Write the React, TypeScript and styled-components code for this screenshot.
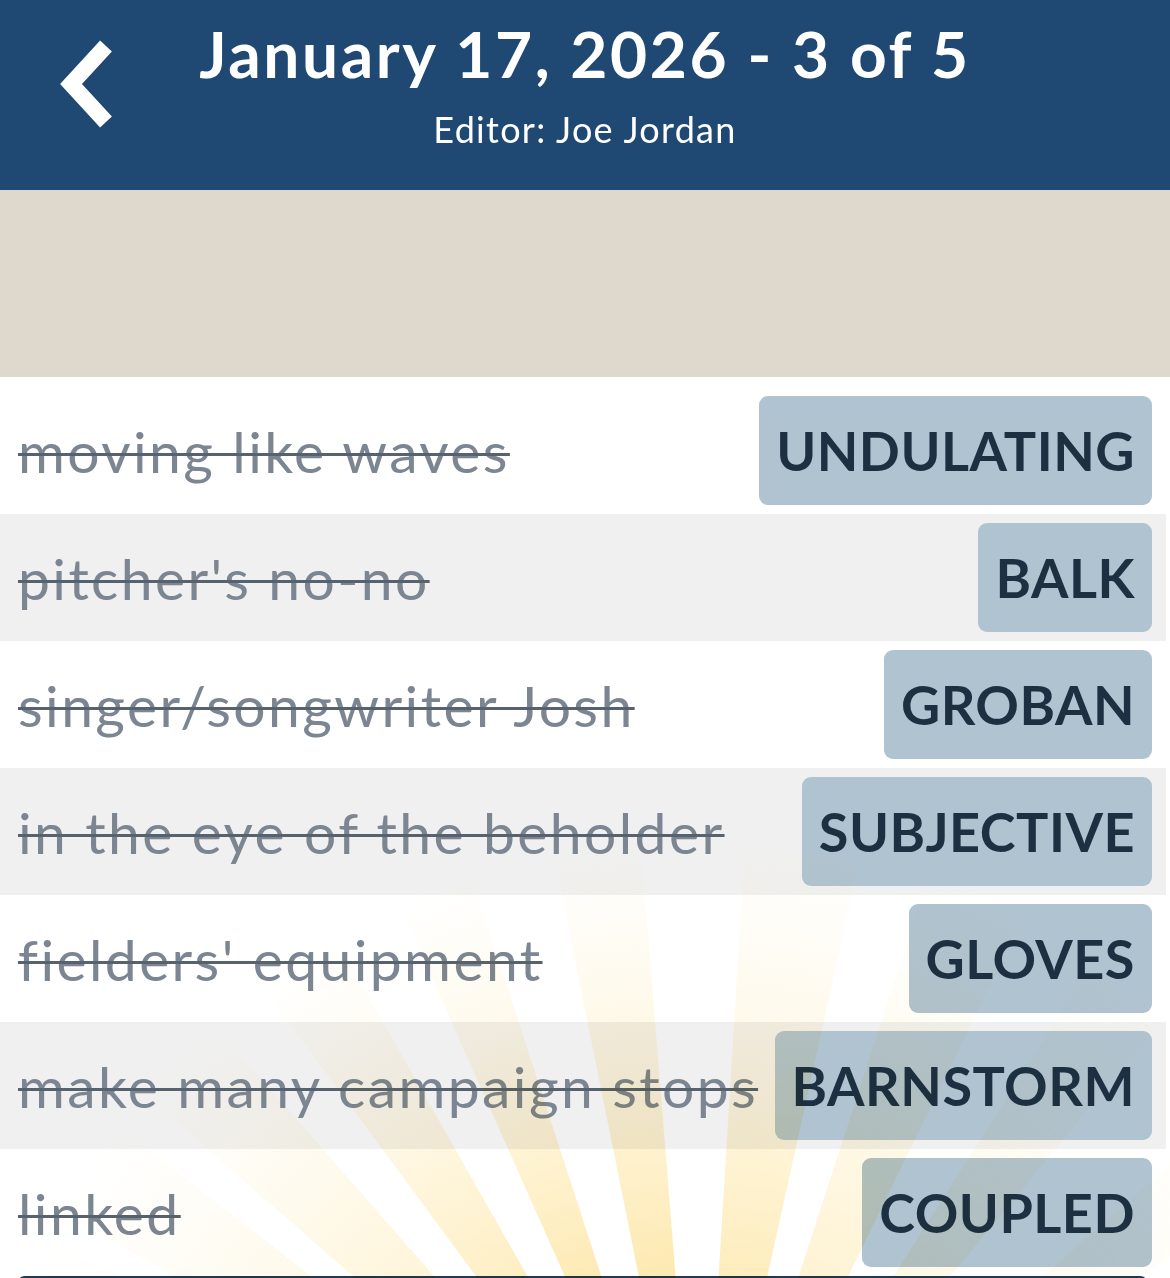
import React from "react";
import styled, { createGlobalStyle } from "styled-components";

const GlobalStyle = createGlobalStyle`
  html, body { margin: 0; padding: 0; background: #ffffff; }
  body { font-family: "Lato", "Open Sans", sans-serif; overflow: hidden; }
  * { box-sizing: border-box; }
`;

const Page = styled.div`
  width: 1170px;
  display: flex;
  flex-direction: column;
`;

const Header = styled.header`
  height: 190px;
  background: #1f4873;
  display: grid;
  grid-template-columns: 1fr auto 1fr;
  align-items: start;
  color: #ffffff;
`;

const BackButton = styled.button`
  justify-self: start;
  margin: 40px 0 0 56px;
  padding: 0;
  width: 70px;
  height: 90px;
  border: none;
  background: transparent;
  cursor: pointer;
`;

const TitleBlock = styled.div`
  display: flex;
  flex-direction: column;
  align-items: center;
  padding-top: 14px;
`;

const Title = styled.h1`
  margin: 0;
  font-size: 64px;
  font-weight: 700;
  line-height: 80px;
  letter-spacing: 2.6px;
`;

const Subtitle = styled.div`
  margin-top: 13px;
  font-size: 36px;
  font-weight: 400;
  line-height: 44px;
  letter-spacing: 1.3px;
`;

const Banner = styled.div`
  height: 187px;
  background: #dfd8cc;
`;

const List = styled.div`
  position: relative;
  background: #ffffff;
  padding: 10px 4px 0 0;
  display: flex;
  flex-direction: column;
`;

const Row = styled.div<{ $alt: boolean }>`
  height: 127px;
  display: flex;
  align-items: center;
  justify-content: space-between;
  gap: 10px;
  padding: 0 14px 0 18px;
  background: ${(p) => (p.$alt ? "#f0f0f0" : "#ffffff")};
`;

const Clue = styled.span`
  font-size: 57px;
  font-weight: 400;
  letter-spacing: 2.4px;
  color: #7c8692;
  white-space: nowrap;
  text-decoration: line-through;
  text-decoration-color: #56626d;
  text-decoration-thickness: 3px;
`;

const Answer = styled.span`
  flex: none;
  height: 109px;
  display: flex;
  align-items: center;
  padding: 0 17px 0 17px;
  border-radius: 9px;
  background: #b0c3d0;
  color: #1c3042;
  font-size: 54px;
  font-weight: 700;
  letter-spacing: 0.5px;
  white-space: nowrap;
`;

const Footer = styled.div`
  height: 24px;
  margin: 0 18px 0 17px;
  background: #1e3a54;
  border-radius: 8px 8px 0 0;
`;

const Rays = styled.svg`
  position: absolute;
  left: 0;
  bottom: 0;
  width: 1170px;
  height: 560px;
  pointer-events: none;
  mix-blend-mode: multiply;
`;

const entries: [string, string][] = [
  ["moving like waves", "UNDULATING"],
  ["pitcher's no-no", "BALK"],
  ["singer/songwriter Josh", "GROBAN"],
  ["in the eye of the beholder", "SUBJECTIVE"],
  ["fielders' equipment", "GLOVES"],
  ["make many campaign stops", "BARNSTORM"],
  ["linked", "COUPLED"],
];

const CX = 700;
const CY = 840; // svg coords: page y ~1558
const rays: { a: number; w: number; o: number }[] = [
  { a: -66, w: 3.5, o: 0.4 },
  { a: -56, w: 4, o: 0.6 },
  { a: -45, w: 3.8, o: 0.7 },
  { a: -33, w: 3.4, o: 0.9 },
  { a: -21, w: 3, o: 1 },
  { a: -8, w: 3.4, o: 1 },
  { a: 8, w: 4.5, o: 0.85 },
  { a: 22, w: 4, o: 0.6 },
  { a: 36, w: 3.5, o: 0.4 },
  { a: 52, w: 3.5, o: 0.3 },
];

function rayPath(angle: number, half: number) {
  const R = 1400;
  const a1 = ((angle - half) * Math.PI) / 180;
  const a2 = ((angle + half) * Math.PI) / 180;
  const x1 = CX + Math.sin(a1) * R;
  const y1 = CY - Math.cos(a1) * R;
  const x2 = CX + Math.sin(a2) * R;
  const y2 = CY - Math.cos(a2) * R;
  return `M${CX} ${CY} L${x1.toFixed(1)} ${y1.toFixed(1)} L${x2.toFixed(1)} ${y2.toFixed(1)} Z`;
}

function Sunburst() {
  return (
    <Rays viewBox="0 0 1170 560" aria-hidden="true">
      <defs>
        <radialGradient id="glow" gradientUnits="userSpaceOnUse" cx={CX} cy={CY} r={740}>
          <stop offset="0" stopColor="#fbd463" stopOpacity="0.65" />
          <stop offset="0.4" stopColor="#fbd66c" stopOpacity="0.55" />
          <stop offset="0.62" stopColor="#fcdc80" stopOpacity="0.35" />
          <stop offset="0.85" stopColor="#fde3a0" stopOpacity="0.14" />
          <stop offset="1" stopColor="#fde7a8" stopOpacity="0" />
        </radialGradient>
      </defs>
      {rays.map((r) => (
        <path key={r.a} d={rayPath(r.a, r.w)} fill="url(#glow)" opacity={r.o} />
      ))}
    </Rays>
  );
}

function ChevronLeft() {
  return (
    <svg width="70" height="90" viewBox="0 0 70 90" aria-hidden="true">
      <polyline
        points="50,6 15,44 50,82"
        fill="none"
        stroke="#ffffff"
        strokeWidth="16"
        strokeLinecap="butt"
        strokeLinejoin="miter"
      />
    </svg>
  );
}

export default function App() {
  return (
    <Page>
      <GlobalStyle />
      <Header>
        <BackButton aria-label="Back">
          <ChevronLeft />
        </BackButton>
        <TitleBlock>
          <Title>January 17, 2026 - 3 of 5</Title>
          <Subtitle>Editor: Joe Jordan</Subtitle>
        </TitleBlock>
        <div />
      </Header>
      <Banner />
      <List>
        {entries.map(([clue, answer], i) => (
          <Row key={answer} $alt={i % 2 === 1}>
            <Clue>{clue}</Clue>
            <Answer>{answer}</Answer>
          </Row>
        ))}
        <Footer />
        <Sunburst />
      </List>
    </Page>
  );
}
